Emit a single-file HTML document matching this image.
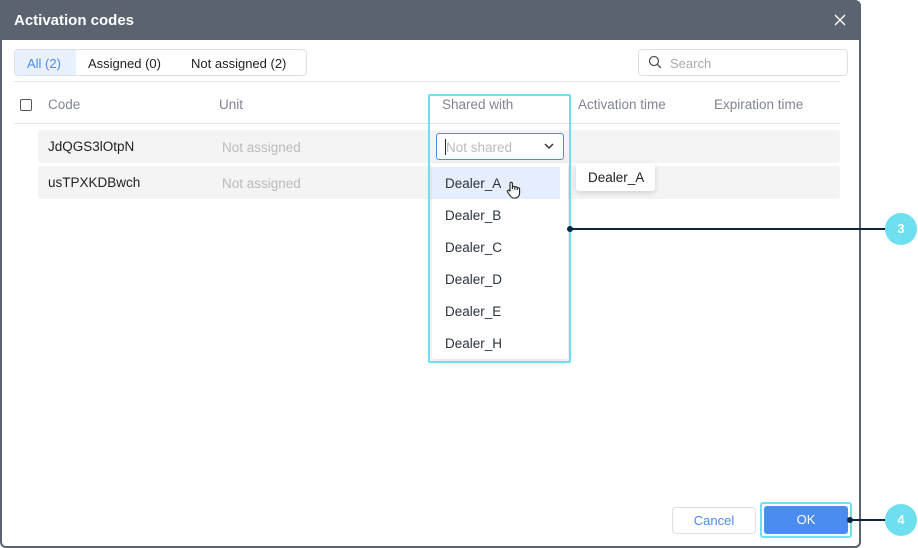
<!DOCTYPE html>
<html><head><meta charset="utf-8"><style>
*{box-sizing:border-box;margin:0;padding:0}
body{width:918px;height:548px;background:#fff;font-family:"Liberation Sans",sans-serif;position:relative;overflow:hidden;font-size:13px}
.a{position:absolute}
.dlg{left:0;top:0;width:861px;height:548px;border:2px solid #5b6372;border-top:none;border-radius:0 6px 6px 6px;background:#fff}
.hdr{left:0;top:0;width:861px;height:40px;background:#5b6270;border-radius:0 6px 0 0;color:#fff;font-size:15px;font-weight:bold}
.th{color:#808590;top:97px;font-size:13.5px}
.row{left:38px;width:802px;height:33px;background:#f4f4f4;border-radius:3px}
.dd{color:#2a3340;font-size:13.5px;left:445px}
</style></head><body>
<div class="a dlg"></div>
<div class="a hdr"><span class="a" style="left:14px;top:12px">Activation codes</span>
<svg class="a" style="left:834px;top:14px" width="12" height="12"><path d="M1 1L11 11M11 1L1 11" stroke="#fff" stroke-width="1.4"/></svg></div>
<div class="a" style="left:14px;top:49px;width:293px;height:27px;border:1px solid #dde0e4;border-radius:4px"></div>
<div class="a" style="left:15px;top:50px;width:61px;height:25px;background:#e8f1fd;border-radius:3px 0 0 3px"></div>
<span class="a" style="left:27px;top:56px;color:#4a8cf0">All (2)</span>
<span class="a" style="left:88px;top:56px;color:#222">Assigned (0)</span>
<span class="a" style="left:191px;top:56px;color:#222">Not assigned (2)</span>
<div class="a" style="left:638px;top:49px;width:210px;height:27px;border:1px solid #dde0e4;border-radius:4px"></div>
<svg class="a" style="left:648px;top:55px" width="14" height="14"><circle cx="6" cy="6" r="4.5" fill="none" stroke="#555" stroke-width="1.3"/><path d="M9.5 9.5L13 13" stroke="#555" stroke-width="1.3"/></svg>
<span class="a" style="left:670px;top:56px;color:#aaa">Search</span>
<div class="a" style="left:14px;top:81px;width:826px;height:1px;background:#e4e6ea"></div>
<div class="a" style="left:20px;top:99px;width:12px;height:12px;border:1.5px solid #555;border-radius:2px"></div>
<span class="a th" style="left:48px">Code</span>
<span class="a th" style="left:219px">Unit</span>
<span class="a th" style="left:442px">Shared with</span>
<span class="a th" style="left:578px">Activation time</span>
<span class="a th" style="left:714px">Expiration time</span>
<div class="a" style="left:14px;top:123px;width:826px;height:1px;background:#e4e6ea"></div>
<div class="a row" style="top:130px"></div>
<div class="a row" style="top:166px"></div>
<span class="a" style="left:48px;top:139px;color:#222;font-size:13.5px">JdQGS3lOtpN</span>
<span class="a" style="left:48px;top:175px;color:#222;font-size:13.5px">usTPXKDBwch</span>
<span class="a" style="left:222px;top:140px;color:#bbb;font-size:13.5px">Not assigned</span>
<span class="a" style="left:222px;top:176px;color:#bbb;font-size:13.5px">Not assigned</span>
<div class="a" style="left:436px;top:133px;width:128px;height:27px;border:1px solid #4a8cf0;border-radius:3px;background:#fff"></div>
<div class="a" style="left:445px;top:139px;width:1px;height:16px;background:#222"></div>
<span class="a" style="left:446px;top:140px;color:#bbb;font-size:13.5px">Not shared</span>
<svg class="a" style="left:544px;top:143px" width="10" height="7"><path d="M1 1L5 5L9 1" fill="none" stroke="#333" stroke-width="1.5"/></svg>
<div class="a" style="left:432px;top:163px;width:136px;height:196px;background:#fff;border-radius:3px;box-shadow:0 2px 8px rgba(0,0,0,.15)"></div>
<div class="a" style="left:432px;top:167px;width:128px;height:32px;background:#e5eefc"></div>
<span class="a dd" style="top:176px">Dealer_A</span>
<span class="a dd" style="top:208px">Dealer_B</span>
<span class="a dd" style="top:240px">Dealer_C</span>
<span class="a dd" style="top:272px">Dealer_D</span>
<span class="a dd" style="top:304px">Dealer_E</span>
<span class="a dd" style="top:336px">Dealer_H</span>
<svg class="a" style="left:505px;top:181px" width="16" height="18"><path d="M5 10V2.5a1.2 1.2 0 0 1 2.4 0V8M7.4 8V6.5a1.2 1.2 0 0 1 2.4 0V8.5M9.8 8.5V7a1.2 1.2 0 0 1 2.4 0V9M12.2 9V8a1.2 1.2 0 0 1 2.4 0v4c0 3-2 5-4.5 5H8.5c-1.5 0-2.5-1-3.5-2.5L2.5 11a1.2 1.2 0 0 1 2-1.3L5 10.5" fill="#fff" stroke="#222" stroke-width="1.1"/></svg>
<div class="a" style="left:576px;top:163px;width:79px;height:28px;background:#fff;border-radius:3px;box-shadow:0 2px 6px rgba(0,0,0,.15)"></div>
<span class="a" style="left:588px;top:170px;color:#222;font-size:13.5px">Dealer_A</span>
<div class="a" style="left:428px;top:94px;width:143px;height:269px;border:2px solid #6ddfee;border-radius:2px"></div>
<div class="a" style="left:570px;top:228px;width:316px;height:2px;background:#0e2440"></div>
<div class="a" style="left:567px;top:226px;width:6px;height:6px;border-radius:50%;background:#0e2440"></div>
<div class="a" style="left:885px;top:213px;width:32px;height:32px;border-radius:50%;background:#6ddfee;color:#fff;font-weight:bold;text-align:center;line-height:32px">3</div>
<div class="a" style="left:672px;top:507px;width:84px;height:27px;border:1px solid #dde0e4;border-radius:4px;color:#4a8cf0;text-align:center;line-height:25px">Cancel</div>
<div class="a" style="left:760px;top:502px;width:92px;height:36px;border:2px solid #6ddfee;border-radius:3px"></div>
<div class="a" style="left:764px;top:506px;width:84px;height:28px;background:#4a8cf0;border-radius:3px;color:#fff;text-align:center;line-height:28px">OK</div>
<div class="a" style="left:850px;top:519px;width:36px;height:2px;background:#0e2440"></div>
<div class="a" style="left:847px;top:517px;width:6px;height:6px;border-radius:50%;background:#0e2440"></div>
<div class="a" style="left:885px;top:504px;width:32px;height:32px;border-radius:50%;background:#6ddfee;color:#fff;font-weight:bold;text-align:center;line-height:32px">4</div>
</body></html>
